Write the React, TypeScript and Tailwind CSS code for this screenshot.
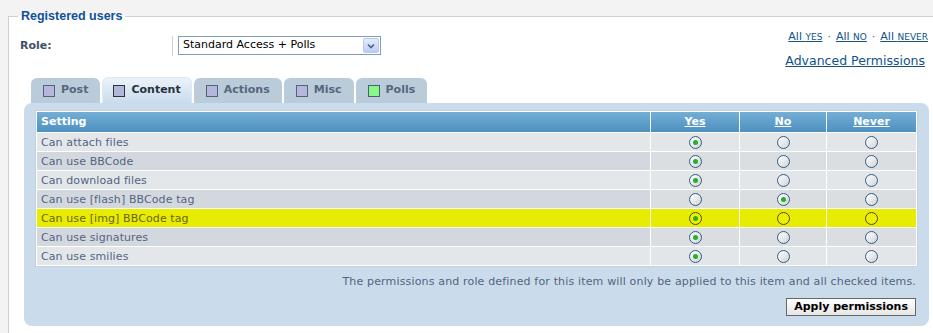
import React from "react"

type Row = { label: string; pick: number; hl?: boolean }

const rows: Row[] = [
  { label: "Can attach files", pick: 0 },
  { label: "Can use BBCode", pick: 0 },
  { label: "Can download files", pick: 0 },
  { label: "Can use [flash] BBCode tag", pick: 1 },
  { label: "Can use [img] BBCode tag", pick: 0, hl: true },
  { label: "Can use signatures", pick: 0 },
  { label: "Can use smilies", pick: 0 },
]

const tabs = [
  { name: "Post", active: false, green: false },
  { name: "Content", active: true, green: false },
  { name: "Actions", active: false, green: false },
  { name: "Misc", active: false, green: false },
  { name: "Polls", active: false, green: true },
]

function Radio({ on, hl }: { on: boolean; hl?: boolean }) {
  return (
    <span
      className={
        hl
          ? "inline-flex h-[13px] w-[13px] items-center justify-center rounded-full border border-[#4a4a10] bg-[#eef000]"
          : "inline-flex h-[13px] w-[13px] items-center justify-center rounded-full border border-[#335b85] bg-linear-to-br from-[#ffffff] to-[#d0d4d8]"
      }
    >
      {on && <span className="h-[5px] w-[5px] rounded-full bg-[#26b026]" />}
    </span>
  )
}

function Tab({ name, active, green }: { name: string; active: boolean; green: boolean }) {
  return (
    <div
      className={
        active
          ? "flex h-[26px] items-center gap-[6px] rounded-t-[6px] border-x border-t border-[#dce8f2] bg-linear-to-b from-[#eaf3fb] to-[#cadceb] px-[10px] text-[#28313f]"
          : "flex h-[25px] items-center gap-[6px] rounded-t-[6px] bg-[#bacbd9] px-[12px] text-[#56677f]"
      }
    >
      <span
        className={
          green
            ? "h-[12px] w-[12px] border border-[#4d5d75] bg-[#88f888]"
            : active
              ? "h-[12px] w-[12px] border border-[#2e3440] bg-[#b4b6d8]"
              : "h-[12px] w-[12px] border border-[#56607e] bg-[#b4b6dc]"
        }
      />
      <span className="text-[11px] font-bold">{name}</span>
    </div>
  )
}

export default function App() {
  return (
    <div className="h-[333px] w-[933px] overflow-hidden bg-[#f3f3f3] pl-[8px] pt-[8px] font-[Verdana,'DejaVu_Sans',sans-serif]">
      <fieldset className="h-[340px] w-[925px] border-l border-t border-[#cfcfcf] bg-white">
        <legend className="ml-[9px] px-[3px] font-['Liberation_Sans',Arial,sans-serif] text-[12.5px] leading-[16px] font-bold text-[#115098]">
          Registered users
        </legend>

        <div className="flex justify-between pl-[11px] pr-[5px]">
          <div className="mt-[12px] flex h-[20px] items-center">
            <div className="w-[152px] text-[11px] font-bold text-[#425067]">Role:</div>
            <div className="flex h-[20px] items-center border-l border-[#d0d0d0] pl-[5px]">
              <div className="-mt-[1px] flex h-[19px] w-[203px] items-center justify-between border border-[#7f9db9] bg-white pl-[4px] pr-[1px]">
                <span className="text-[11px] text-black">Standard Access + Polls</span>
                <span className="flex h-[15px] w-[16px] items-center justify-center rounded-[2px] border border-[#b6c8ec] bg-linear-to-b from-[#e4ecfd] to-[#bccdf4]">
                  <svg width="8" height="6" viewBox="0 0 8 6">
                    <path d="M1 1.5 L4 4.5 L7 1.5" fill="none" stroke="#4d6185" strokeWidth="1.6" />
                  </svg>
                </span>
              </div>
            </div>
          </div>

          <div className="pt-[5px] text-right">
            <div className="text-[11px] leading-[14px] text-[#536482]">
              <a className="text-[#105289] underline">
                All <span className="text-[12.5px] [font-variant:small-caps]">yes</span>
              </a>
              <span className="px-[5px]">·</span>
              <a className="text-[#105289] underline">
                All <span className="text-[12.5px] [font-variant:small-caps]">no</span>
              </a>
              <span className="px-[5px]">·</span>
              <a className="text-[#105289] underline">
                All <span className="text-[12.5px] [font-variant:small-caps]">never</span>
              </a>
            </div>
            <div className="mt-[9px] pr-[3px] text-[12.5px] leading-[15px]">
              <a className="text-[#105289] underline">Advanced Permissions</a>
            </div>
          </div>
        </div>

        <div className="mt-[9px] flex items-end gap-[2px] pl-[22px]">
          {tabs.map((t) => (
            <Tab key={t.name} {...t} />
          ))}
        </div>

        <div className="ml-[15px] w-[905px] rounded-[8px] bg-[#cadceb] pb-[10px] pl-[11px] pr-[11px] pt-[7px]">
          <table className="w-[883px] border-separate border-spacing-[1px] border border-[#c4d2de] bg-white text-[11px]">
            <thead>
              <tr className="text-white">
                <th className="h-[20px] bg-linear-to-b from-[#74aed5] to-[#4d90c1] pl-[4px] pt-[1px] text-left font-bold">Setting</th>
                <th className="w-[88px] bg-linear-to-b from-[#74aed5] to-[#4d90c1] pt-[1px] font-bold">
                  <span className="underline">Yes</span>
                </th>
                <th className="w-[86px] bg-linear-to-b from-[#74aed5] to-[#4d90c1] pt-[1px] font-bold">
                  <span className="underline">No</span>
                </th>
                <th className="w-[89px] bg-linear-to-b from-[#74aed5] to-[#4d90c1] pt-[1px] font-bold">
                  <span className="underline">Never</span>
                </th>
              </tr>
            </thead>
            <tbody>
              {rows.map((r, i) => {
                const even = i % 2 === 1
                const labelBg = r.hl ? "bg-[#e8ec00] text-[#6a6410]" : even ? "bg-[#d3d8df] text-[#536482]" : "bg-[#e3e7ea] text-[#536482]"
                const cellBg = r.hl ? "bg-[#e8ec00]" : even ? "bg-[#dbdee1]" : "bg-[#e3e6e8]"
                return (
                  <tr key={r.label}>
                    <td className={`h-[18px] pl-[4px] leading-[17px] tracking-[0.1px] ${labelBg}`}>{r.label}</td>
                    {[0, 1, 2].map((c) => (
                      <td key={c} className={`h-[18px] text-center align-middle leading-[0] ${cellBg}`}>
                        <Radio on={r.pick === c} hl={r.hl} />
                      </td>
                    ))}
                  </tr>
                )
              })}
            </tbody>
          </table>

          <div className="mt-[8px] pr-[2px] text-right text-[11px] leading-[14px] tracking-[0.16px] text-[#536482]">
            The permissions and role defined for this item will only be applied to this item and all checked items.
          </div>

          <div className="mt-[9px] flex justify-end pr-[2px]">
            <button className="h-[18px] border border-[#666666] bg-linear-to-b from-[#ffffff] to-[#e6e6e6] px-[7px] text-[11px] leading-[16px] font-bold text-black">
              Apply permissions
            </button>
          </div>
        </div>
      </fieldset>
    </div>
  )
}
